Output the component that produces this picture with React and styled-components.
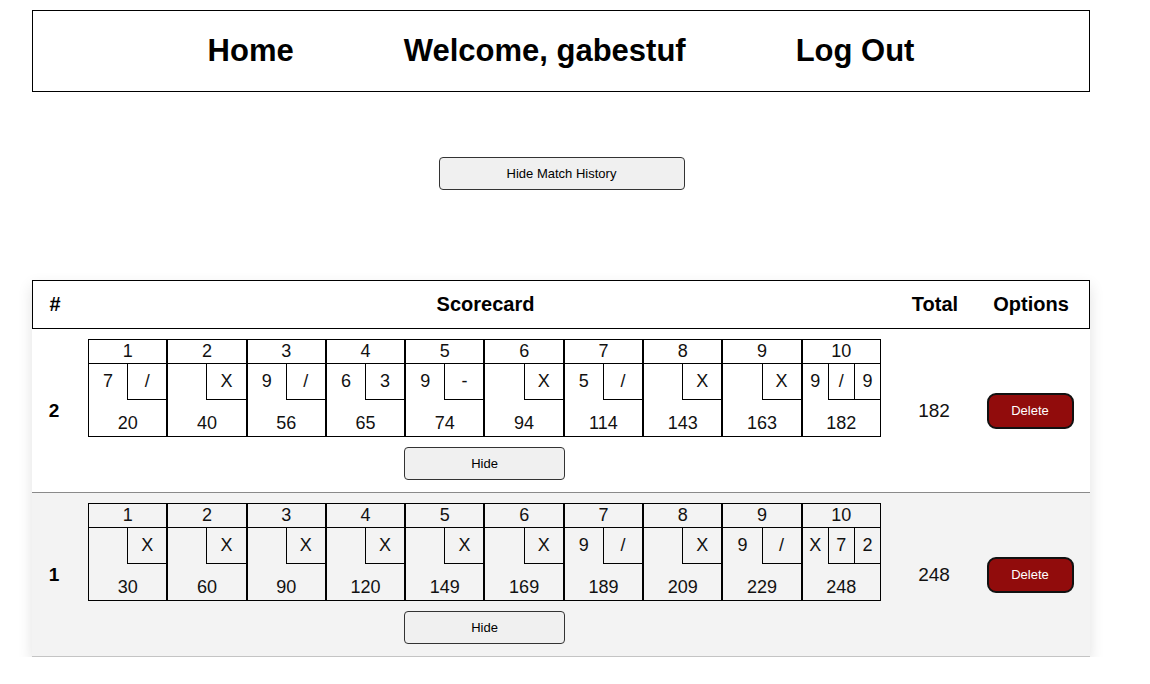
import styled, { createGlobalStyle } from "styled-components";

/* ===================== STYLES ===================== */

const GlobalStyle = createGlobalStyle`
  * { box-sizing: border-box; }
  body {
    margin: 0;
    background: #fff;
    font-family: "Liberation Sans", Arial, sans-serif;
    color: #000;
  }
`;

const Page = styled.div`
  width: 1150px;
  padding: 10px 0 0 32px;
`;

const Nav = styled.nav`
  width: 1058px;
  height: 82px;
  border: 1px solid #000;
  display: flex;
  align-items: center;
  justify-content: center;
  gap: 110px;

  a {
    font-size: 31px;
    font-weight: 700;
    color: #000;
    text-decoration: none;
    cursor: pointer;
  }
`;

const HistoryBar = styled.div`
  width: 1058px;
  display: flex;
  justify-content: center;
  padding: 65px 0 90px;
`;

const GreyButton = styled.button`
  width: ${({ $w }) => $w}px;
  height: 33px;
  margin-left: ${({ $shift }) => $shift || 0}px;
  background: #f0f0f0;
  border: 1px solid #333;
  border-radius: 4px;
  font-family: "Liberation Sans", Arial, sans-serif;
  font-size: 13px;
  color: #000;
  cursor: pointer;
`;

const Table = styled.div`
  width: 1058px;
  box-shadow: 0 6px 14px rgba(0, 0, 0, 0.12);
`;

const Cols = styled.div`
  display: grid;
  grid-template-columns: 44px 817px 82px 110px;
  align-items: center;
  text-align: center;
`;

const HeadRow = styled(Cols)`
  height: 49px;
  border: 1px solid #000;
  font-size: 20px;
  font-weight: 700;
`;

const Row = styled(Cols)`
  background: ${({ $alt }) => ($alt ? "#f3f3f3" : "#fff")};
  border-bottom: 1px solid ${({ $alt }) => ($alt ? "#c4c4c4" : "#8a8a8a")};
`;

const RowNum = styled.div`
  font-size: 19px;
  font-weight: 700;
`;

const Total = styled.div`
  font-size: 19px;
  color: #111;
`;

const ScoreCell = styled.div`
  display: flex;
  flex-direction: column;
  align-items: center;
  padding: 10px 0 12px;
  gap: 10px;
`;

const Card = styled.div`
  width: 793px;
  display: flex;
  color: #111;
  font-size: 18px;
`;

const Frame = styled.div`
  flex: 1;
  border: 1px solid #000;
  display: flex;
  flex-direction: column;
`;

const FrameNum = styled.div`
  height: 24px;
  line-height: 23px;
  border-bottom: 1px solid #000;
`;

const Rolls = styled.div`
  display: flex;
  height: 36px;
`;

const Roll = styled.div`
  flex: 1;
  line-height: 35px;
  border-left: ${({ $box }) => ($box ? "1px solid #000" : "none")};
  border-bottom: ${({ $box }) => ($box ? "1px solid #000" : "none")};
`;

const Score = styled.div`
  height: 36px;
  line-height: 46px;
`;

const DeleteButton = styled.button`
  width: 87px;
  height: 36px;
  background: #910c0c;
  border: 2px solid #111;
  border-radius: 9px;
  color: #fff;
  font-family: "Liberation Sans", Arial, sans-serif;
  font-size: 13px;
  cursor: pointer;
`;

/* ===================== DATA ===================== */

const games = [
  {
    id: 2,
    total: 182,
    frames: [
      ["7", "/"], ["", "X"], ["9", "/"], ["6", "3"], ["9", "-"],
      ["", "X"], ["5", "/"], ["", "X"], ["", "X"], ["9", "/", "9"],
    ],
    scores: [20, 40, 56, 65, 74, 94, 114, 143, 163, 182],
  },
  {
    id: 1,
    total: 248,
    frames: [
      ["", "X"], ["", "X"], ["", "X"], ["", "X"], ["", "X"],
      ["", "X"], ["9", "/"], ["", "X"], ["9", "/"], ["X", "7", "2"],
    ],
    scores: [30, 60, 90, 120, 149, 169, 189, 209, 229, 248],
  },
];

/* ===================== COMPONENT ===================== */

function Scorecard({ frames, scores }) {
  return (
    <Card>
      {frames.map((rolls, i) => (
        <Frame key={i}>
          <FrameNum>{i + 1}</FrameNum>
          <Rolls>
            {rolls.map((r, j) => (
              <Roll key={j} $box={j > 0}>{r}</Roll>
            ))}
          </Rolls>
          <Score>{scores[i]}</Score>
        </Frame>
      ))}
    </Card>
  );
}

export default function App() {
  return (
    <>
      <GlobalStyle />
      <Page>
        <Nav>
          <a>Home</a>
          <a>Welcome, gabestuf</a>
          <a>Log Out</a>
        </Nav>

        <HistoryBar>
          <GreyButton $w={246} $shift={1}>Hide Match History</GreyButton>
        </HistoryBar>

        <Table>
          <HeadRow>
            <div>#</div>
            <div>Scorecard</div>
            <div>Total</div>
            <div>Options</div>
          </HeadRow>

          {games.map((g, i) => (
            <Row key={g.id} $alt={i % 2 === 1}>
              <RowNum>{g.id}</RowNum>
              <ScoreCell>
                <Scorecard frames={g.frames} scores={g.scores} />
                <GreyButton $w={161}>Hide</GreyButton>
              </ScoreCell>
              <Total>{g.total}</Total>
              <div>
                <DeleteButton>Delete</DeleteButton>
              </div>
            </Row>
          ))}
        </Table>
      </Page>
    </>
  );
}
